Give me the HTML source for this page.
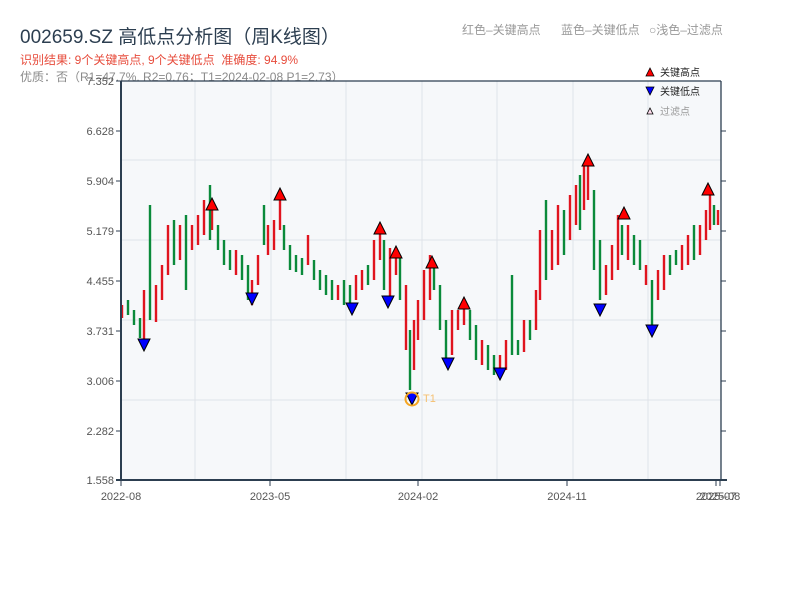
<!DOCTYPE html>
<html><head><meta charset="utf-8"><style>
body{margin:0;background:#fff;width:800px;height:600px;overflow:hidden;font-family:"Liberation Sans","Noto Sans CJK SC",sans-serif;position:relative}
.t{position:absolute;white-space:nowrap}
svg text{font-family:"Liberation Sans","Noto Sans CJK SC",sans-serif}
</style></head><body>
<div class="t" style="left:20px;top:22px;font-size:19px;color:#2c3e50;">002659.SZ 高低点分析图（周K线图）</div>
<div class="t" style="left:20px;top:51px;font-size:12px;color:#e74c3c;">识别结果: 9个关键高点, 9个关键低点&nbsp;&nbsp;准确度: 94.9%</div>
<div class="t" style="left:20px;top:68px;font-size:12px;color:#8a8a8a;">优质：否（R1=47.7%, R2=0.76；T1=2024-02-08 P1=2.73）</div>
<div class="t" style="left:462px;top:21px;font-size:12px;color:#999;">红色–关键高点</div>
<div class="t" style="left:561px;top:21px;font-size:12px;color:#999;">蓝色–关键低点</div>
<div class="t" style="left:649px;top:21px;font-size:12px;color:#999;">○浅色–过滤点</div>
<svg width="800" height="600" style="position:absolute;left:0;top:0" xmlns="http://www.w3.org/2000/svg">
<rect x="121" y="81" width="600" height="399" fill="#f6f8fa"/>
<g stroke="#dfe3e9" stroke-width="1">
<path d="M121 160H721M121 240H721M121 320H721M121 400H721"/>
<path d="M195 81V480M271 81V480M346 81V480M422 81V480M497 81V480M573 81V480M648 81V480"/>
</g>
<path stroke="#e0141e" stroke-width="2.4" fill="none" d="M122 305V318M144 290V340M156 285V322M162 265V300M168 225V275M180 225V260M192 225V250M198 215V245M204 200V235M212 210V230M236 250V275M252 280V305M258 255V285M268 225V255M274 220V250M280 190V230M308 235V265M338 285V300M356 275V300M362 270V290M374 240V280M380 225V260M390 248V300M396 250V275M406 285V350M414 320V370M418 300V340M424 270V320M430 255V300M452 310V355M458 310V330M464 300V325M482 340V365M500 355V372M506 340V370M524 320V352M536 290V330M540 230V300M552 230V270M558 205V265M570 195V240M576 185V225M584 165V210M588 158V200M606 265V295M612 245V280M618 215V270M628 225V260M646 265V285M658 270V300M664 255V290M682 245V270M688 235V265M700 225V255M706 210V240M710 190V230M718 210V225"/>
<path stroke="#0a8a3a" stroke-width="2.4" fill="none" d="M128 300V315M134 310V325M140 318V338M150 205V320M174 220V265M186 215V290M210 185V240M218 225V250M224 240V265M230 250V270M242 255V280M248 265V300M264 205V245M284 225V250M290 245V270M296 255V272M302 258V275M314 260V280M320 270V290M326 275V295M332 280V300M344 280V305M350 285V310M368 265V285M384 240V290M400 255V300M410 330V390M434 265V290M440 285V330M446 320V365M470 310V340M476 325V360M488 345V370M494 355V375M512 275V355M518 340V355M530 320V340M546 200V280M564 210V255M580 175V230M594 190V270M600 240V300M622 225V255M634 235V265M640 240V270M652 280V330M670 255V275M676 250V265M694 225V260M714 205V225"/>
<g stroke="#2c3e50">
<line x1="121" x2="721" y1="81" y2="81" stroke-width="1.3"/>
<line x1="721" x2="721" y1="81" y2="480" stroke-width="1.3"/>
<line x1="121" x2="121" y1="81" y2="481" stroke-width="2"/>
<line x1="116" x2="727" y1="480" y2="480" stroke-width="2"/>
<path d="M116 81H121M116 131H121M116 181H121M116 231H121M116 281H121M116 331H121M116 381H121M116 431H121M721 131H726M721 181H726M721 231H726M721 281H726M721 331H726M721 381H726M721 431H726M121 480V486M270 480V486M418 480V486M567 480V486M716 480V486M720 480V486"/>
</g>
<g font-size="11" fill="#555" text-anchor="end">
<text x="114" y="85">7.352</text><text x="114" y="135">6.628</text><text x="114" y="185">5.904</text><text x="114" y="235">5.179</text><text x="114" y="285">4.455</text><text x="114" y="335">3.731</text><text x="114" y="385">3.006</text><text x="114" y="435">2.282</text><text x="114" y="484">1.558</text>
</g>
<g font-size="11" fill="#555" text-anchor="middle">
<text x="121" y="500">2022-08</text><text x="270" y="500">2023-05</text><text x="418" y="500">2024-02</text><text x="567" y="500">2024-11</text><text x="716" y="500">2025-07</text><text x="720" y="500">2025-08</text>
</g>
<g fill="#f00" stroke="#000" stroke-width="1">
<polygon points="206,210 218,210 212,198"/><polygon points="274,200 286,200 280,188"/><polygon points="374,234 386,234 380,222"/><polygon points="390,258 402,258 396,246"/><polygon points="426,268 438,268 432,256"/><polygon points="458,309 470,309 464,297"/><polygon points="582,166 594,166 588,154"/><polygon points="618,219 630,219 624,207"/><polygon points="702,195 714,195 708,183"/>
</g>
<g fill="#00f" stroke="#000" stroke-width="1">
<polygon points="138,339 150,339 144,351"/><polygon points="246,293 258,293 252,305"/><polygon points="346,303 358,303 352,315"/><polygon points="382,296 394,296 388,308"/><polygon points="442,358 454,358 448,370"/><polygon points="494,368 506,368 500,380"/><polygon points="594,304 606,304 600,316"/><polygon points="646,325 658,325 652,337"/><polygon points="406,393 418,393 412,405"/>
</g>
<circle cx="412" cy="399" r="6.5" fill="none" stroke="#f5a623" stroke-width="2"/>
<text x="423" y="402" font-size="11" fill="#f5c070">T1</text>
<polygon points="646,76 654,76 650,68" fill="#f00" stroke="#000" stroke-width="0.8"/><text x="660" y="76" font-size="10" fill="#222">关键高点</text>
<polygon points="646,87 654,87 650,95" fill="#00f" stroke="#000" stroke-width="0.8"/><text x="660" y="95" font-size="10" fill="#222">关键低点</text>
<polygon points="647,114 653,114 650,108" fill="#fde" stroke="#000" stroke-width="0.8"/><text x="660" y="115" font-size="10" fill="#999">过滤点</text>
</svg>
</body></html>
